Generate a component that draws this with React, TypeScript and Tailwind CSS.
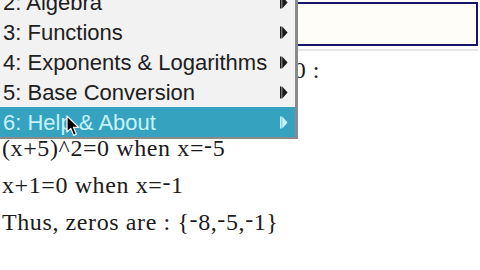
const SubArrow = ({ light }: { light?: boolean }) => (
  <svg width="8" height="13" viewBox="0 0 8 13" className="shrink-0">
    <rect x="0" y="0.5" width="1.6" height="12" fill={light ? '#c9f4ff' : '#1a1a1a'} />
    <path d="M2.2 0.5 L7.6 6.5 L2.2 12.5 Z" fill={light ? '#c9f4ff' : '#1a1a1a'} />
  </svg>
);

const menuItems = [
  '2: Algebra',
  '3: Functions',
  '4: Exponents & Logarithms',
  '5: Base Conversion',
  '6: Help & About',
];

// TI style raised negative sign
const Neg = () => <span className="relative top-[-3px]">-</span>;

const Cursor = () => (
  <svg width="14" height="22" viewBox="0 0 14 22" className="absolute left-[66px] top-[115px]">
    <path
      d="M1 1 L1 17 L4.8 13.4 L7.6 20.4 L10.4 19.2 L7.6 12.4 L12.6 12.4 Z"
      fill="#000"
      stroke="#fff"
      strokeWidth="1.2"
      strokeLinejoin="round"
    />
  </svg>
);

export default function App() {
  return (
    <div className="relative w-[480px] h-[270px] overflow-hidden bg-white font-['Liberation_Serif',serif] text-[#1b1b1b]">
      {/* document */}
      <div className="flex flex-col pl-[2px]">
        <div className="mt-[2px] h-[44px] w-[476px] border-2 border-[#151565] bg-[#fffdf8]" />
        <div className="mt-[3px] h-[2px] w-[476px] bg-[#e6e6e6]" />
        <div className="h-[34px] w-[318px] flex items-end justify-end whitespace-nowrap text-[24px] leading-[30px] tracking-[0.5px]">
          (x+8)·(x+5)^2·(x+1)=0 :
        </div>
        <div className="mt-[45px] flex flex-col text-[24px] leading-[37px] tracking-[0.6px] whitespace-nowrap">
          <div>(x+5)^2=0 when x=<Neg />5</div>
          <div>x+1=0 when x=<Neg />1</div>
          <div>Thus, zeros are : {'{'}<Neg />8,<Neg />5,<Neg />1{'}'}</div>
        </div>
      </div>

      {/* dropdown menu */}
      <div className="absolute left-0 top-[-13px] w-[298px] flex flex-col bg-[#f2f2f2] border-r-[3px] border-b-[2px] border-[#8a8a8a] font-['Liberation_Sans',sans-serif] text-[22px]">
        {menuItems.map((label, i) => {
          const active = i === menuItems.length - 1;
          return (
            <div
              key={label}
              className={
                active
                  ? 'h-[30px] flex items-center justify-between pl-[3px] pr-[7px] bg-[#35a2bf] text-[#c6f2fc]'
                  : 'h-[30px] flex items-center justify-between pl-[3px] pr-[7px] text-[#202020]'
              }
            >
              <span className="whitespace-nowrap">{label}</span>
              <SubArrow light={active} />
            </div>
          );
        })}
      </div>

      <Cursor />
    </div>
  );
}
